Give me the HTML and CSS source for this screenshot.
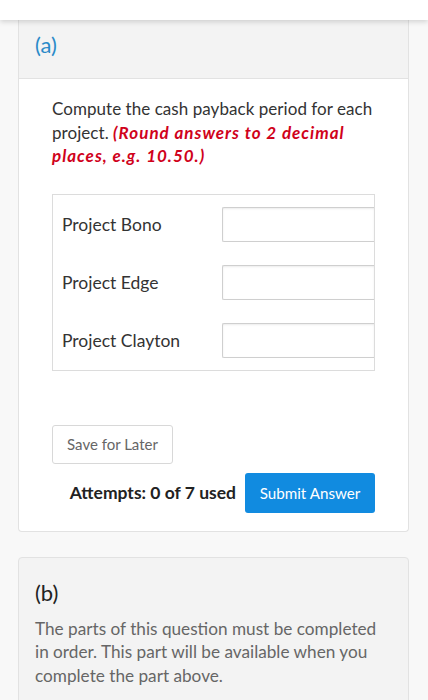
FILE: index.html
```html
<!DOCTYPE html>
<html lang="en">
<head>
    <meta charset="UTF-8">
    <meta name="viewport" content="width=device-width, initial-scale=1.0">
    <title>Question</title>
    <link rel="stylesheet" href="styles.css">
</head>
<body>
    <div class="topbar"></div>
    <div class="page">
        <div class="part">
            <div class="part-head">(a)</div>
            <div class="part-body">
                <p class="prompt">Compute the cash payback period for each project. <em class="hint">(Round answers to 2 decimal places, e.g. 10.50.)</em></p>
                <div class="answers">
                    <div class="row">
                        <label for="bono">Project Bono</label>
                        <input type="text" id="bono">
                    </div>
                    <div class="row">
                        <label for="edge">Project Edge</label>
                        <input type="text" id="edge">
                    </div>
                    <div class="row">
                        <label for="clayton">Project Clayton</label>
                        <input type="text" id="clayton">
                    </div>
                </div>
                <button class="btn-save">Save for Later</button>
                <div class="submit-row">
                    <span class="attempts">Attempts: 0 of 7 used</span>
                    <button class="btn-submit">Submit Answer</button>
                </div>
            </div>
        </div>
        <div class="part locked">
            <div class="locked-title">(b)</div>
            <p class="locked-text">The parts of this question must be completed in order. This part will be available when you complete the part above.</p>
        </div>
    </div>
</body>
</html>
```

FILE: styles.css
```css
body {
    margin: 0;
    background: #f8f8f8;
    font-family: Lato, "Open Sans", sans-serif;
    color: #333;
}
.topbar {
    height: 20px;
    background: #fff;
    box-shadow: 0 2px 5px rgba(0, 0, 0, 0.15);
    position: relative;
}
.page {
    padding: 0 19px 0 18px;
}
.part {
    background: #fff;
    border: 1px solid #e2e2e2;
    border-top: none;
    border-radius: 0 0 4px 4px;
}
.part-head {
    background: #f3f3f3;
    border-bottom: 1px solid #e2e2e2;
    height: 59px;
    box-sizing: border-box;
    padding: 11px 16px 0;
    font-size: 22px;
    color: #2a8ac8;
}
.part-body {
    padding: 18px 33px 18px 33px;
}
.prompt {
    margin: 0;
    font-size: 17px;
    letter-spacing: 0.05px;
    line-height: 23.5px;
    color: #333;
}
.hint {
    color: #d0021b;
    font-weight: bold;
    letter-spacing: 1px;
}
.answers {
    margin-top: 26px;
    border: 1px solid #dcdcdc;
    padding: 12px 0 12px 9px;
    display: flex;
    flex-direction: column;
    gap: 23px;
}
.row {
    display: flex;
    align-items: center;
    height: 35px;
}
.row label {
    flex: none;
    width: 160px;
    font-size: 17.5px;
    color: #333;
}
.row input {
    flex: 1;
    min-width: 0;
    height: 35px;
    box-sizing: border-box;
    border: 1px solid #cfcfcf;
    border-right: none;
    border-radius: 2px 0 0 2px;
    box-shadow: inset 0 1px 2px rgba(0, 0, 0, 0.08);
    margin: 0;
}
.btn-save {
    display: block;
    margin-top: 54px;
    height: 39px;
    width: 121px;
    background: #fff;
    border: 1px solid #d8d8d8;
    border-radius: 3px;
    font-family: Lato, sans-serif;
    font-size: 15px;
    color: #666;
}
.submit-row {
    margin-top: 9px;
    display: flex;
    justify-content: flex-end;
    align-items: center;
    gap: 9px;
}
.attempts {
    font-weight: bold;
    font-size: 17.5px;
    color: #222;
}
.btn-submit {
    height: 40px;
    width: 130px;
    background: #118be0;
    color: #fff;
    border: none;
    border-radius: 3px;
    font-family: Lato, sans-serif;
    font-size: 15.2px;
}
.locked {
    margin-top: 25px;
    background: #f3f3f3;
    border-top: 1px solid #e2e2e2;
    border-radius: 4px;
    padding: 21px 30px 20px 16px;
}
.locked-title {
    font-size: 22px;
    color: #222;
}
.locked-text {
    margin: 11px 0 0;
    font-size: 17.2px;
    line-height: 23.5px;
    color: #666;
}
```
